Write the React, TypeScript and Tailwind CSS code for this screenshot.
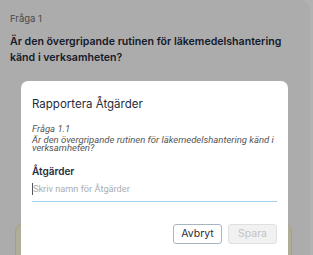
import React from "react";

export default function App() {
  return (
    <div className="relative w-[313px] h-[255px] overflow-hidden bg-white" style={{ fontFamily: "Inter, 'Noto Sans', sans-serif" }}>
      {/* underlying page */}
      <div className="w-[310px] h-[300px] bg-[#f7f7f7] rounded-tr-[10px] pt-[12px] pl-[10px] pr-[12px]">
        <div className="text-[9.5px] text-[#6b6b6b] leading-[14px]">Fråga 1</div>
        <div className="mt-[8px] text-[10.6px] font-semibold text-[#1c2a3d] leading-[16px]">
          Är den övergripande rutinen för läkemedelshantering känd i verksamheten?
        </div>
        <div className="mt-[156px] ml-[5px] w-[277px] h-[60px] rounded-[10px] bg-[#fbf6dc] border border-[#efe7b8]"></div>
      </div>
      {/* overlay */}
      <div className="absolute inset-0 bg-black/30"></div>
      {/* dialog */}
      <div className="absolute left-[21px] top-[81px] w-[267px] h-[190px] bg-white rounded-[7px] pl-[11px] pr-[11px] pt-[15px]">
        <div className="text-[11.5px] text-[#1f2d3d] leading-[16px]">Rapportera Åtgärder</div>
        <div className="mt-[11px] italic text-[#555] text-[9.5px] leading-[11px]" style={{ fontFamily: "Roboto, sans-serif" }}>Fråga 1.1</div>
        <div className="mt-[2px] italic text-[#555] text-[9.5px] leading-[8px]" style={{ fontFamily: "Roboto, sans-serif" }}>
          Är den övergripande rutinen för läkemedelshantering känd i verksamheten?
        </div>
        <div className="mt-[12px] text-[10px] font-semibold text-[#1f2d3d] leading-[14px]">Åtgärder</div>
        <div className="mt-[4px] h-[20px] border-b border-[#9fd0ee] flex items-start">
          <span className="w-px h-[12px] bg-[#555] mt-[1px]"></span>
          <span className="text-[9.2px] text-[#a8adb3] leading-[14px]" style={{ fontFamily: "Roboto, sans-serif" }}>Skriv namn för Åtgärder</span>
        </div>
        <div className="mt-[22px] flex justify-end gap-[6px]">
          <button className="w-[49px] h-[20px] rounded-[3px] border border-[#a9b4c2] bg-white text-[10.5px] text-[#1f2d3d] flex items-center justify-center">Avbryt</button>
          <button className="w-[49px] h-[20px] rounded-[3px] border border-[#e0e0e0] bg-[#f1f1f1] text-[10.5px] text-[#c4c4c4] flex items-center justify-center">Spara</button>
        </div>
      </div>
    </div>
  );
}
